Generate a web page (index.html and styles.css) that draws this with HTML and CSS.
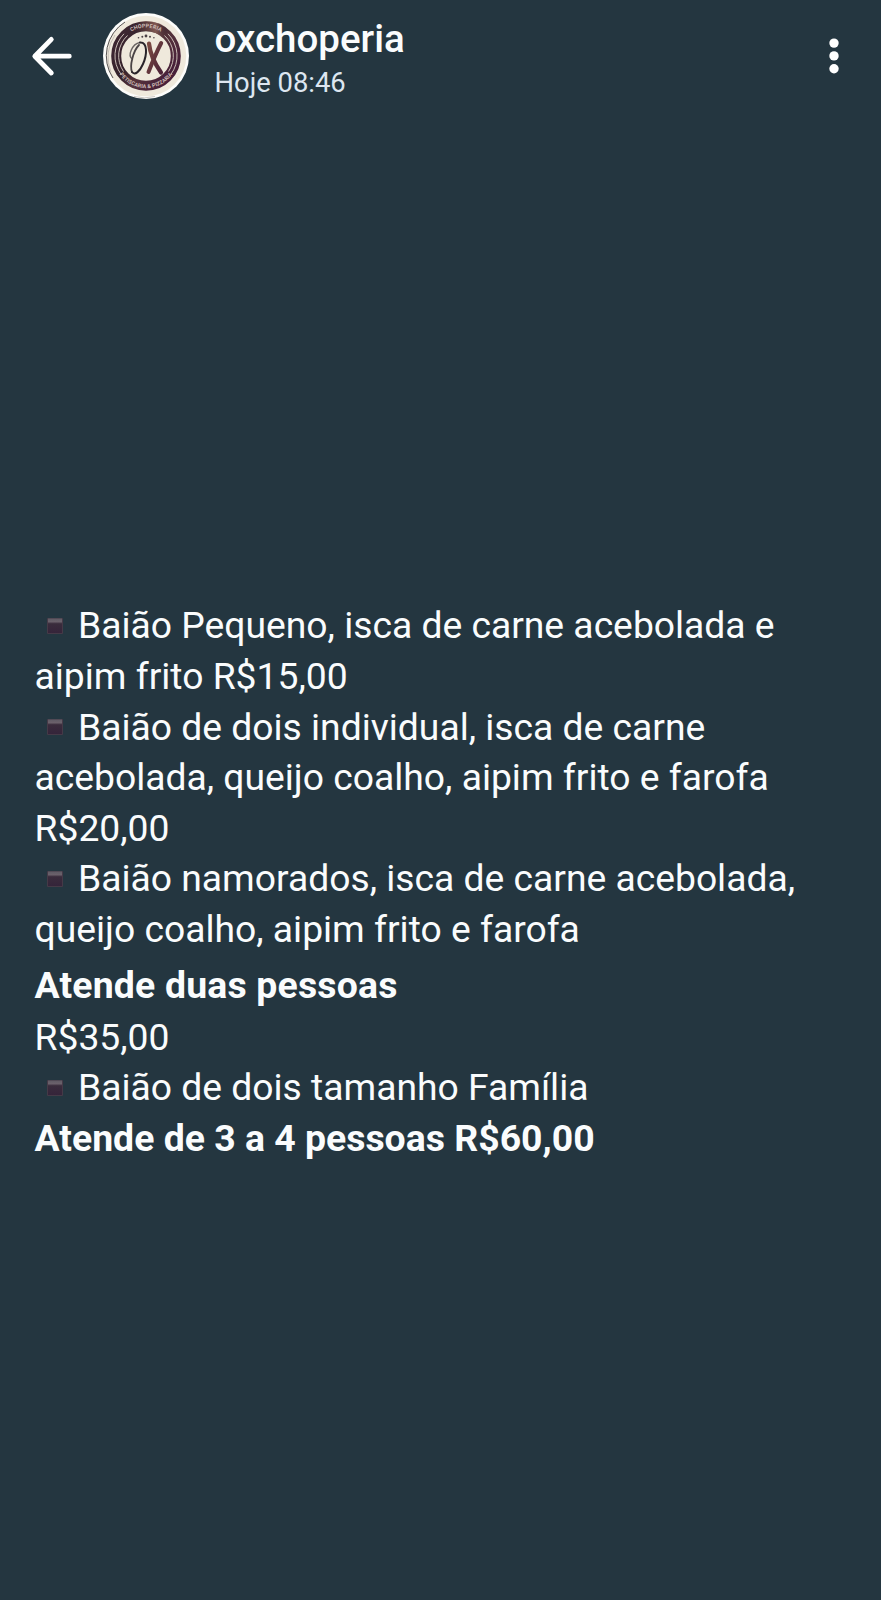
FILE: index.html
```html
<!DOCTYPE html>
<html lang="pt-BR">
<head>
<meta charset="utf-8">
<title>oxchoperia</title>
<link rel="stylesheet" href="styles.css">
</head>
<body>
<svg class="defs" width="0" height="0" aria-hidden="true">
  <defs>
    <linearGradient id="tile" x1="0" y1="0" x2="0" y2="1">
      <stop offset="0" stop-color="#5f5a64"/>
      <stop offset=".22" stop-color="#6b616b"/>
      <stop offset=".36" stop-color="#3a2c3c"/>
      <stop offset="1" stop-color="#35243a"/>
    </linearGradient>
    <symbol id="bullet" viewBox="0 0 16 16">
      <rect width="16" height="16" rx="1" fill="#453a47"/>
      <rect x="1" y="0.5" width="14" height="14.5" fill="url(#tile)"/>
    </symbol>
  </defs>
</svg>
<header class="bar">
  <svg class="back" viewBox="0 0 44 44" fill="none" stroke="#fff" stroke-width="4.8" stroke-linecap="round" stroke-linejoin="round">
    <path d="M39.3 22.2H5M21.3 5.4L4.8 22.2L21.3 39"/>
  </svg>
  <svg class="avatar" viewBox="0 0 86 86">
    <defs>
      <linearGradient id="ring" x1=".1" y1=".2" x2=".9" y2=".8">
        <stop offset="0" stop-color="#3c2630"/>
        <stop offset=".35" stop-color="#33222b"/>
        <stop offset=".6" stop-color="#54323a"/>
        <stop offset="1" stop-color="#48203a"/>
      </linearGradient>
      <linearGradient id="sheen" x1="0" y1="0" x2="1" y2="0">
        <stop offset=".2" stop-color="#8a5a50" stop-opacity="0"/>
        <stop offset=".65" stop-color="#95675c" stop-opacity=".8"/>
        <stop offset=".9" stop-color="#5a343a" stop-opacity="0"/>
      </linearGradient>
      <linearGradient id="cross" x1="0" y1="0" x2="1" y2="1">
        <stop offset="0" stop-color="#7b4a42"/>
        <stop offset="1" stop-color="#4b2237"/>
      </linearGradient>
      <path id="arc-top" d="M14.5 43A28.5 28.5 0 0 1 71.5 43"/>
      <path id="arc-bottom" d="M10.8 43A32.2 32.2 0 0 0 75.2 43"/>
    </defs>
    <circle cx="43" cy="43" r="43" fill="#fdfdfb"/>
    <circle cx="43" cy="43" r="40.3" fill="#efe9dc"/>
    <path d="M10 65A40 40 0 0 1 22 9" fill="none" stroke="#4a4648" stroke-width=".9"/>
    <path d="M8 59A38 38 0 0 1 12 22M31 83.5A42 42 0 0 0 52 83.5" fill="none" stroke="#aaa39c" stroke-width=".6"/>
    <circle cx="43" cy="43" r="29.8" fill="none" stroke="url(#ring)" stroke-width="10"/>
    <path d="M24 19.8A29.8 29.8 0 0 1 68.6 27.7" fill="none" stroke="url(#sheen)" stroke-width="10"/>
    <g fill="none" stroke="#c9bdb6" stroke-width="1">
      <path d="M18.2 61.5A31.2 31.2 0 0 1 21 20.8M20.5 58.5A27.7 27.7 0 0 1 24.5 22.5"/>
      <path d="M67.8 61.5A31.2 31.2 0 0 0 65 20.8M65.5 58.5A27.7 27.7 0 0 0 61.5 22.5"/>
    </g>
    <text class="seal"><textPath href="#arc-top" startOffset="50%" text-anchor="middle" textLength="31">CHOPPERIA</textPath></text>
    <text class="seal"><textPath href="#arc-bottom" startOffset="50%" text-anchor="middle" textLength="62">PETISCARIA &amp; PIZZARIA</textPath></text>
    <g fill="#4b4145">
      <circle cx="35.5" cy="24.7" r=".8"/><circle cx="39.3" cy="23.8" r="1"/><circle cx="43" cy="23" r="1.4"/><circle cx="47" cy="23.8" r="1"/><circle cx="50.9" cy="24.7" r=".8"/>
    </g>
    <g fill="none" stroke-linecap="round">
      <path d="M29.5 46C24 43 29 31 37 29.5" stroke="#6a6463" stroke-width="1.4"/>
      <path d="M36 32C30 38 26.500 53 29 59" stroke="#4a4446" stroke-width="1.8"/>
      <path d="M37 29.500C45 29 44 42 40 51C37 58 32 63 29 59" stroke="#29242a" stroke-width="2"/>
      <path d="M46 30.500C47 40 52 51 58 59.5" stroke="url(#cross)" stroke-width="4.2"/>
      <path d="M58.2 30C53 40 49 50 45.500 59" stroke="url(#cross)" stroke-width="4"/>
    </g>
  </svg>
  <div class="who">
    <div class="name">oxchoperia</div>
    <div class="time">Hoje 08:46</div>
  </div>
  <svg class="more" viewBox="0 0 12 38" fill="#fff">
    <circle cx="6" cy="6.1" r="4.7"/><circle cx="6" cy="18.9" r="4.7"/><circle cx="6" cy="31.8" r="4.7"/>
  </svg>
</header>
<main class="status">
  <p><svg class="bullet"><use href="#bullet"/></svg>Baião Pequeno, isca de carne acebolada e</p>
  <p>aipim frito R$15,00</p>
  <p><svg class="bullet"><use href="#bullet"/></svg>Baião de dois individual, isca de carne</p>
  <p>acebolada, queijo coalho, aipim frito e farofa</p>
  <p>R$20,00</p>
  <p><svg class="bullet"><use href="#bullet"/></svg>Baião namorados, isca de carne acebolada,</p>
  <p>queijo coalho, aipim frito e farofa</p>
  <p class="strong serves">Atende duas pessoas</p>
  <p>R$35,00</p>
  <p><svg class="bullet"><use href="#bullet"/></svg>Baião de dois tamanho Família</p>
  <p class="strong">Atende de 3 a 4 pessoas R$60,00</p>
</main>
</body>
</html>
```

FILE: styles.css
```css
* { box-sizing: border-box; }
body {
  margin: 0;
  min-height: 1600px;
  background: #243640;
  color: #fafcfd;
  font-family: Roboto, "Liberation Sans", sans-serif;
}
.defs { display: block; }
.bar {
  display: flex;
  align-items: center;
  height: 112px;
  padding: 0 41px 0 30px;
}
.back { width: 44px; height: 44px; }
.avatar { width: 86px; height: 86px; margin-left: 29px; }
.seal {
  fill: #cdbdb8;
  font: 700 5.4px Roboto, sans-serif;
}
.who { margin-left: 25.5px; padding-top: 5px; flex: 1; white-space: nowrap; }
.name { font-size: 38.5px; font-weight: 500; line-height: 46px; }
.time { font-size: 27.4px; line-height: 36px; color: #dde6f0; margin-top: 3px; }
.more { width: 12px; height: 38px; }
.status { padding: 488.2px 0 0 34.5px; }
.status p {
  display: flex;
  align-items: center;
  margin: 0;
  height: 50.67px;
  font-size: 37.25px;
  line-height: 50.67px;
  white-space: nowrap;
}
.status .strong { font-weight: 700; font-size: 37.4px; }
.status .serves { height: 52px; margin-top: 5px; letter-spacing: .18px; }
.bullet { width: 16px; height: 16px; margin: 0 15px 0 12.5px; }
```
